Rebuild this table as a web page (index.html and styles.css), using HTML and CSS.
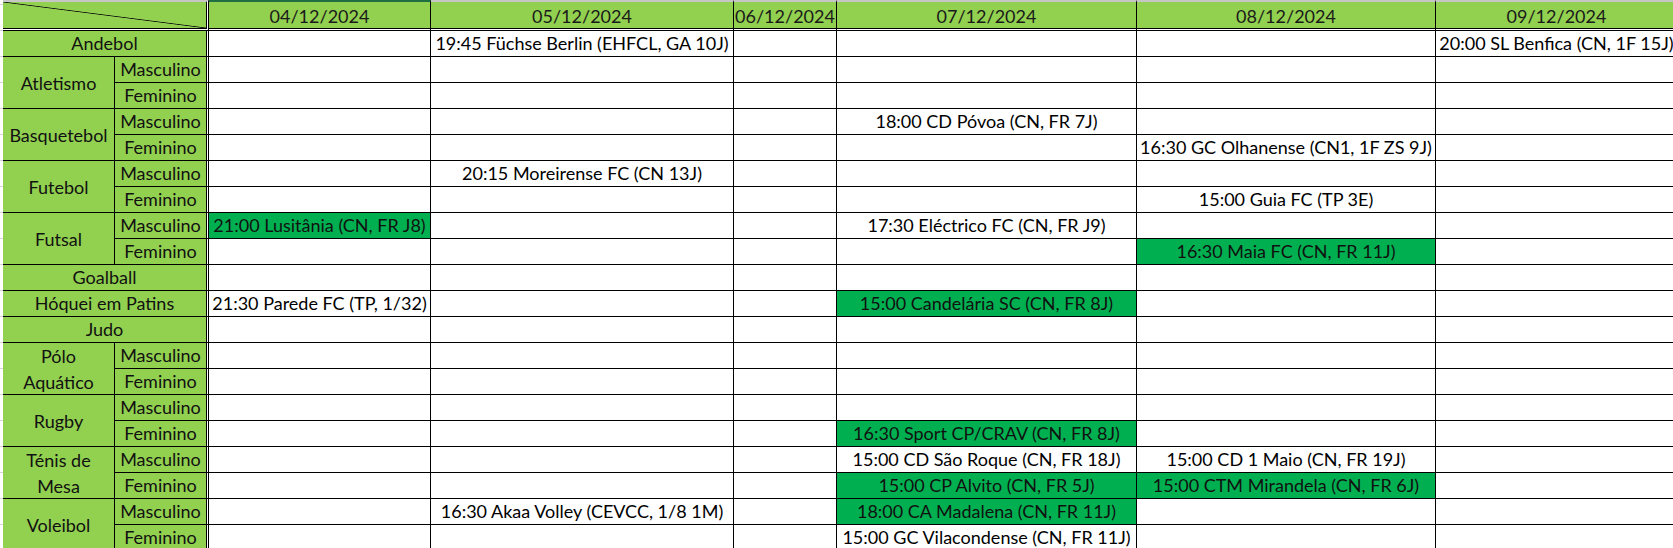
FILE: index.html
```html
<!DOCTYPE html>
<html lang="pt">
<head>
<meta charset="utf-8">
<title>Calendário</title>
<link rel="stylesheet" href="styles.css">
</head>
<body>
<div class="sheet">
  <div class="grid">
    <div class="corner"></div>
    <div class="hd sel">04/12/2024</div>
    <div class="hd">05/12/2024</div>
    <div class="hd">06/12/2024</div>
    <div class="hd">07/12/2024</div>
    <div class="hd">08/12/2024</div>
    <div class="hd">09/12/2024</div>

    <div class="sp wide">Andebol</div>
    <div class="c"></div><div class="c">19:45 Füchse Berlin (EHFCL, GA 10J)</div><div class="c"></div><div class="c"></div><div class="c"></div><div class="c">20:00 SL Benfica (CN, 1F 15J)</div>

    <div class="sp tall">Atletismo</div>
    <div class="sub">Masculino</div>
    <div class="c"></div><div class="c"></div><div class="c"></div><div class="c"></div><div class="c"></div><div class="c"></div>
    <div class="sub">Feminino</div>
    <div class="c"></div><div class="c"></div><div class="c"></div><div class="c"></div><div class="c"></div><div class="c"></div>

    <div class="sp tall">Basquetebol</div>
    <div class="sub">Masculino</div>
    <div class="c"></div><div class="c"></div><div class="c"></div><div class="c">18:00 CD Póvoa (CN, FR 7J)</div><div class="c"></div><div class="c"></div>
    <div class="sub">Feminino</div>
    <div class="c"></div><div class="c"></div><div class="c"></div><div class="c"></div><div class="c">16:30 GC Olhanense (CN1, 1F ZS 9J)</div><div class="c"></div>

    <div class="sp tall">Futebol</div>
    <div class="sub">Masculino</div>
    <div class="c"></div><div class="c">20:15 Moreirense FC (CN 13J)</div><div class="c"></div><div class="c"></div><div class="c"></div><div class="c"></div>
    <div class="sub">Feminino</div>
    <div class="c"></div><div class="c"></div><div class="c"></div><div class="c"></div><div class="c">15:00 Guia FC (TP 3E)</div><div class="c"></div>

    <div class="sp tall">Futsal</div>
    <div class="sub">Masculino</div>
    <div class="c g">21:00 Lusitânia (CN, FR J8)</div><div class="c"></div><div class="c"></div><div class="c">17:30 Eléctrico FC (CN, FR J9)</div><div class="c"></div><div class="c"></div>
    <div class="sub">Feminino</div>
    <div class="c"></div><div class="c"></div><div class="c"></div><div class="c"></div><div class="c g">16:30 Maia FC (CN, FR 11J)</div><div class="c"></div>

    <div class="sp wide">Goalball</div>
    <div class="c"></div><div class="c"></div><div class="c"></div><div class="c"></div><div class="c"></div><div class="c"></div>

    <div class="sp wide">Hóquei em Patins</div>
    <div class="c">21:30 Parede FC (TP, 1/32)</div><div class="c"></div><div class="c"></div><div class="c g">15:00 Candelária SC (CN, FR 8J)</div><div class="c"></div><div class="c"></div>

    <div class="sp wide">Judo</div>
    <div class="c"></div><div class="c"></div><div class="c"></div><div class="c"></div><div class="c"></div><div class="c"></div>

    <div class="sp tall">Pólo Aquático</div>
    <div class="sub">Masculino</div>
    <div class="c"></div><div class="c"></div><div class="c"></div><div class="c"></div><div class="c"></div><div class="c"></div>
    <div class="sub">Feminino</div>
    <div class="c"></div><div class="c"></div><div class="c"></div><div class="c"></div><div class="c"></div><div class="c"></div>

    <div class="sp tall">Rugby</div>
    <div class="sub">Masculino</div>
    <div class="c"></div><div class="c"></div><div class="c"></div><div class="c"></div><div class="c"></div><div class="c"></div>
    <div class="sub">Feminino</div>
    <div class="c"></div><div class="c"></div><div class="c"></div><div class="c g">16:30 Sport CP/CRAV (CN, FR 8J)</div><div class="c"></div><div class="c"></div>

    <div class="sp tall">Ténis de Mesa</div>
    <div class="sub">Masculino</div>
    <div class="c"></div><div class="c"></div><div class="c"></div><div class="c">15:00 CD São Roque (CN, FR 18J)</div><div class="c">15:00 CD 1 Maio (CN, FR 19J)</div><div class="c"></div>
    <div class="sub">Feminino</div>
    <div class="c"></div><div class="c"></div><div class="c"></div><div class="c g">15:00 CP Alvito (CN, FR 5J)</div><div class="c g">15:00 CTM Mirandela (CN, FR 6J)</div><div class="c"></div>

    <div class="sp tall">Voleibol</div>
    <div class="sub">Masculino</div>
    <div class="c"></div><div class="c">16:30 Akaa Volley (CEVCC, 1/8 1M)</div><div class="c"></div><div class="c g">18:00 CA Madalena (CN, FR 11J)</div><div class="c"></div><div class="c"></div>
    <div class="sub">Feminino</div>
    <div class="c"></div><div class="c"></div><div class="c"></div><div class="c">15:00 GC Vilacondense (CN, FR 11J)</div><div class="c"></div><div class="c"></div>
  </div>
</div>
</body>
</html>
```
FILE: styles.css
```css
html, body {
  margin: 0;
  padding: 0;
  background: #ffffff;
  overflow: hidden;
}

body {
  font-family: Lato, "Noto Sans", sans-serif;
  font-size: 18px;
  color: #000;
}

.sheet {
  width: 1673px;
  height: 548px;
  padding-left: 3px;
  box-sizing: border-box;
  background-image: linear-gradient(to bottom, transparent 25px, #d4d4d4 25px);
  background-size: 3px 26px;
  background-repeat: repeat-y;
  background-position: 0 5px;
  overflow: hidden;
}

.grid {
  display: grid;
  grid-template-columns: 112px 94px 222px 303px 103px 300px 299px 242px;
  grid-template-rows: 31px repeat(20, 26px);
}

.grid > div {
  box-sizing: border-box;
  min-width: 0;
}

.corner {
  grid-column: span 2;
  border-top: 2px solid #c6c6c6;
  border-right: 3px double #000;
  border-bottom: 3px double #000;
  background: linear-gradient(to top right, #92d050 calc(50% - 0.8px), #111 50%, #92d050 calc(50% + 0.8px));
  background-clip: padding-box;
}

.hd {
  background: #92d050;
  background-clip: padding-box;
  border-top: 2px solid #c6c6c6;
  border-right: 1px solid #000;
  border-bottom: 3px double #000;
  display: flex;
  align-items: center;
  justify-content: center;
  line-height: 26px;
  padding-top: 1px;
  color: #1a1a1a;
  white-space: nowrap;
}

.hd.sel {
  border-top-color: #1f6f43;
}

.sp {
  background: #92d050;
  background-clip: padding-box;
  border-right: 1px solid #000;
  border-bottom: 1px solid #000;
  display: flex;
  align-items: center;
  justify-content: center;
  text-align: center;
  line-height: 26px;
  color: #111;
  padding: 0 4px;
}

.sp.wide {
  grid-column: span 2;
  border-right: 3px double #000;
  line-height: 25px;
  white-space: nowrap;
}

.sp.tall {
  grid-row: span 2;
}

.sub {
  background: #92d050;
  background-clip: padding-box;
  border-right: 3px double #000;
  border-bottom: 1px solid #000;
  display: flex;
  align-items: center;
  justify-content: center;
  line-height: 25px;
  color: #111;
  white-space: nowrap;
}

.c {
  border-right: 1px solid #000;
  border-bottom: 1px solid #000;
  display: flex;
  align-items: center;
  justify-content: center;
  line-height: 25px;
  white-space: nowrap;
}

.c.g {
  background: #00b050;
  background-clip: padding-box;
  color: #111;
}
```
